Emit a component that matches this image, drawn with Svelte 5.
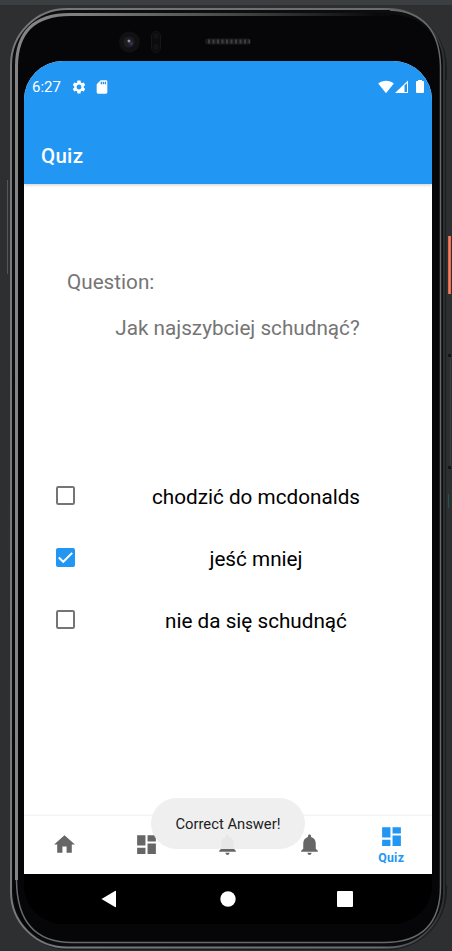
<script>
  let answers = $state([
    { text: 'chodzić do mcdonalds', checked: false },
    { text: 'jeść mniej', checked: true },
    { text: 'nie da się schudnąć', checked: false }
  ]);
  const dashboard = 'M3 13h8V3H3v10zm0 8h8v-6H3v6zm10 0h8V11h-8v10zm0-18v6h8V3h-8z';
  const bell = 'M12 22c1.1 0 2-.9 2-2h-4c0 1.1.89 2 2 2zm6-6v-5c0-3.07-1.64-5.64-4.5-6.32V4c0-.83-.67-1.5-1.5-1.5s-1.5.67-1.5 1.5v.68C7.63 5.36 6 7.92 6 11v5l-2 2v1h16v-1l-2-2z';
  const tabs = [
    { name: 'Home', icon: 'M10 20v-6h4v6h5v-8h3L12 3 2 12h3v8z' },
    { name: 'Dashboard', icon: dashboard },
    { name: 'Notifications', icon: bell },
    { name: 'Alerts', icon: bell },
    { name: 'Quiz', icon: dashboard, active: true }
  ];
</script>

<div class="stage">
  <svg class="device" width="452" height="951" viewBox="0 0 452 951" aria-hidden="true">
    <defs>
      <linearGradient id="rim" gradientUnits="userSpaceOnUse" x1="10" y1="0" x2="446" y2="0">
        <stop offset="0" stop-color="#77797c" />
        <stop offset="0.85" stop-color="#6a6d70" />
        <stop offset="1" stop-color="#2c2e30" />
      </linearGradient>
      <linearGradient id="edge" gradientUnits="userSpaceOnUse" x1="14" y1="0" x2="440" y2="0">
        <stop offset="0" stop-color="#858585" />
        <stop offset="0.15" stop-color="#808080" />
        <stop offset="0.5" stop-color="#484a4a" />
        <stop offset="0.85" stop-color="#0a0a0c" />
      </linearGradient>
      <linearGradient id="power" x1="0" y1="0" x2="1" y2="0">
        <stop offset="0" stop-color="#d9573d" />
        <stop offset="0.5" stop-color="#fa8065" />
        <stop offset="1" stop-color="#e4634a" />
      </linearGradient>
    </defs>
    <rect width="452" height="951" fill="#2e2f31" />
    <rect width="452" height="5" fill="#3c3f41" />
    <path d="M7.500 180V274" stroke="#55585a" />
    <rect x="448" y="236" width="3" height="58" fill="url(#power)" />
    <path d="M450.500 357V467" stroke="#3b3c3d" />
    <path d="M448 355.500h3M448 467.500h3" stroke="#151515" stroke-width="3" />
    <path d="M448.500 494v14" stroke="#1f5557" />
    <rect x="10" y="8" width="437" height="942" rx="60" fill="#1c1d1e" />
    <rect x="11" y="9" width="433" height="938.500" rx="56" fill="#0c0d0e" stroke="url(#rim)" stroke-width="2" />
    <path d="M16 70Q16 14 72 14H384Q440.500 14 440.500 70V886Q440.500 942.500 384 942.500H72Q13 942.500 13 886Z" fill="#060608" />
    <path d="M16.500 880V66Q17 14.500 70 14.500H390" fill="none" stroke="url(#edge)" stroke-width="3" />
    <path d="M16.500 880Q17 942.500 72 942.500H384Q440.500 942.500 440.500 886V66Q439 12 390 10" fill="none" stroke="#666a6a" stroke-width="1.500" />
    <path d="M443.500 80V885M446.500 80V885" stroke="#2b2d2e" />
    <circle cx="129.500" cy="42" r="10.500" fill="#111113" />
    <circle cx="129" cy="42" r="5.500" fill="#1d1d24" />
    <circle cx="129" cy="41" r="1.500" fill="#92929b" />
    <circle cx="131" cy="43.500" r="2" fill="#303052" />
    <rect x="151.500" y="31.500" width="9" height="21" rx="4.500" fill="#0b0b0d" stroke="#151517" />
    <circle cx="156" cy="36" r="3" fill="#121214" /><circle cx="156" cy="47" r="3" fill="#121214" />
    <rect x="205" y="38.500" width="46" height="6" rx="3" fill="#1a1a1b" />
    <path d="M208 41.500H250" stroke="#3e3e40" stroke-width="4" stroke-dasharray="2 2.500" />
  </svg>

  <main class="screen">
    <header>
      <div class="status">
        <span class="time">6:27</span>
        <svg class="gear" width="16" height="16" viewBox="0 0 24 24"><path d="M19.140 12.940c.04-.3.06-.61.06-.94 0-.32-.02-.64-.07-.94l2.030-1.580c.18-.14.23-.41.12-.61l-1.920-3.320c-.12-.22-.37-.29-.59-.22l-2.390.96c-.5-.38-1.030-.7-1.620-.94L14.400 2.810c-.04-.24-.24-.41-.48-.41h-3.840c-.24 0-.43.17-.47.41l-.36 2.540c-.59.24-1.130.57-1.620.94l-2.390-.96c-.22-.08-.47 0-.59.22L2.740 8.870c-.12.21-.08.47.12.61l2.030 1.580c-.05.3-.09.63-.09.94s.02.64.07.94l-2.030 1.580c-.18.14-.23.41-.12.61l1.920 3.320c.12.22.37.29.59.22l2.390-.96c.5.38 1.030.7 1.620.94l.36 2.540c.05.24.24.41.48.41h3.840c.24 0 .44-.17.47-.41l.36-2.540c.59-.24 1.130-.56 1.620-.94l2.390.96c.22.08.47 0 .59-.22l1.920-3.320c.12-.22.07-.47-.12-.61l-2.010-1.580zM12 15.600c-1.980 0-3.600-1.620-3.600-3.600s1.620-3.600 3.600-3.600 3.600 1.620 3.600 3.600-1.620 3.600-3.600 3.600z" /></svg>
        <svg class="card" width="16" height="16" viewBox="0 0 24 24"><path d="M18 2h-8L4.020 8 4 20c0 1.100.9 2 2 2h12c1.100 0 2-.9 2-2V4c0-1.100-.9-2-2-2zm-6 6h-2V4h2v4zm3 0h-2V4h2v4zm3 0h-2V4h2v4z" /></svg>
        <svg class="signals" width="48" height="16" viewBox="0 0 48 16"><path d="M.2 4.600C4.500.8 11.500.8 15.800 4.600L8 14.300z" /><path d="M17 14 30 1.500V14z" /><path d="M26.500 6.500 29 4v9h-2.500z" fill="#2196f3" /><path d="M40 2V1h4v1h1q1 0 1 1v10q0 1-1 1h-6q-1 0-1-1V3q0-1 1-1z" /></svg>
      </div>
      <h1>Quiz</h1>
    </header>

    <section class="content">
      <p class="label">Question:</p>
      <p class="question">Jak najszybciej schudnąć?</p>
      <div class="answers">
        {#each answers as answer}
          <label>
            <input type="checkbox" bind:checked={answer.checked} />
            <svg width="19" height="19" viewBox="0 0 19 19">
              {#if answer.checked}
                <rect width="19" height="19" rx="2" fill="#2196f3" />
                <path d="M2.800 9.500 7.300 13.800 16.200 4.900" fill="none" stroke="#fff" stroke-width="2" />
              {:else}
                <rect x="1" y="1" width="17" height="17" rx="1.300" fill="none" stroke="#757575" stroke-width="2" />
              {/if}
            </svg>
            <span>{answer.text}</span>
          </label>
        {/each}
      </div>
    </section>

    <nav class="tabs">
      {#each tabs as tab}
        <button class:active={tab.active} aria-label={tab.name}>
          <svg width="25" height="25" viewBox="0 0 24 24"><path d={tab.icon} /></svg>
          {#if tab.active}<span>{tab.name}</span>{/if}
        </button>
      {/each}
    </nav>

    <footer>
      <svg width="16" height="18" viewBox="0 0 16 18"><path d="M.5 9 14 1q1-.5 1 .5v15q0 1-1 .5z" /></svg>
      <svg width="16" height="16" viewBox="0 0 16 16"><circle cx="8" cy="8" r="7.700" /></svg>
      <svg width="16" height="16" viewBox="0 0 16 16"><rect width="16" height="16" rx="1" /></svg>
    </footer>
    <div class="toast">Correct Answer!</div>
  </main>
</div>

<style>
  :global(body) { margin: 0; }
  .stage { position: relative; box-sizing: border-box; width: 452px; height: 951px; padding: 61px 20px 27px 24px; overflow: hidden; font-family: Roboto, "Noto Sans", sans-serif; }
  .device { position: absolute; inset: 0; }
  .screen { position: relative; display: flex; flex-direction: column; width: 408px; height: 863px; border-radius: 39px; overflow: hidden; background: linear-gradient(#fff 813px, #000 813px); }
  header { position: relative; flex: none; box-sizing: border-box; height: 123px; background: #2196f3; color: #fff; box-shadow: 0 1px 3px #0003; }
  .status { display: flex; align-items: center; height: 16px; padding: 18px 6px 0 8px; }
  .status svg { fill: #fff; }
  .time { width: 39px; font-size: 15px; line-height: 16px; white-space: nowrap; }
  .card { margin-left: 7px; }
  .signals { margin-left: auto; }
  h1 { margin: 48px 0 0 17px; font-size: 20.500px; letter-spacing: .3px; line-height: 26px; font-weight: 500; }
  .content { flex: 1; min-height: 0; }
  p { margin: 0; color: #757575; font-size: 20.700px; line-height: 24px; }
  .label { padding: 86px 0 0 43px; }
  .question { padding: 22px 0 0 19px; text-align: center; }
  .answers { padding: 125px 0 0 32px; }
  label { display: flex; align-items: center; height: 62px; }
  label svg { margin-bottom: 1px; }
  input { position: absolute; opacity: 0; }
  label span { width: 306px; margin-left: 28px; text-align: center; font-size: 20.700px; line-height: 24px; color: #000; padding-top: 2px; }
  .tabs { display: flex; flex: none; height: 58px; box-shadow: 0 -1px 2px #00000012; }
  button { display: flex; flex: 1; flex-direction: column; align-items: center; justify-content: center; margin: 0; padding: 0 0 1px; border: 0; background: none; color: #666; font: inherit; }
  button svg { fill: currentColor; }
  button.active { color: #2196f3; }
  button span { font-size: 12.300px; letter-spacing: .3px; line-height: 14px; font-weight: 700; margin-top: 2px; }
  footer { display: flex; flex: none; align-items: center; justify-content: space-between; box-sizing: border-box; height: 50px; padding: 0 79px 0 77px; background: #000; }
  footer svg { fill: #fff; }
  footer svg:nth-child(2) { margin-left: 1px; }
  .toast { position: absolute; left: 127px; top: 737px; width: 154px; height: 51px; border-radius: 26px; background: rgba(238, 238, 238, .95); color: #212121; text-align: center; font-size: 14.750px; line-height: 53px; }
</style>
